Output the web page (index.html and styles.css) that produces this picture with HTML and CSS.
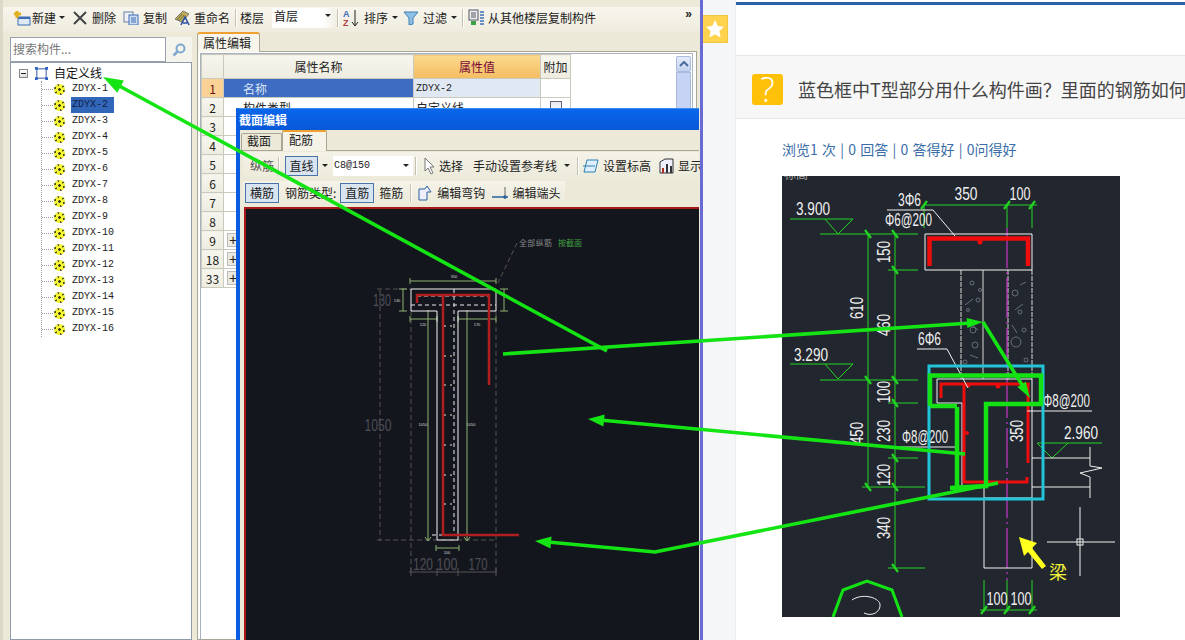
FILE: index.html
```html
<!DOCTYPE html>
<html lang="zh">
<head>
<meta charset="utf-8">
<title>截面编辑</title>
<link rel="stylesheet" href="styles.css">
</head>
<body>
<div class="app">
  <div class="tool-row">
    <svg class="ico i-new" viewBox="0 0 18 16"><rect x="5" y="7" width="12" height="8" fill="#dfe8f5" stroke="#3d6db5"/><rect x="5" y="7" width="12" height="2" fill="#3d6db5"/><path d="M4 1v7M1 4h7" stroke="#e0b020" stroke-width="3"/></svg>
    <span class="tl">新建</span><i class="caret c-a"></i>
    <svg class="ico i-del" viewBox="0 0 14 14"><path d="M1 1l12 12M13 1L1 13" stroke="#444" stroke-width="2"/></svg>
    <span class="tl">删除</span>
    <svg class="ico i-copy" viewBox="0 0 16 14"><rect x="1" y="1" width="9" height="10" fill="#eef2f8" stroke="#6a7f9f"/><rect x="6" y="4" width="9" height="10" fill="#cfddf0" stroke="#3d6db5"/><path d="M8 7h5M8 9h5M8 11h5" stroke="#3d6db5"/></svg>
    <span class="tl">复制</span>
    <svg class="ico i-ren" viewBox="0 0 17 16"><path d="M1 9L9 1l6 3-7 8z" fill="#c8a850" stroke="#777"/><path d="M3 10l5-6M5 11l5-6" stroke="#5a7a4a"/><path d="M7 15l4-8 4 8M9 13h4" stroke="#2a50a0" stroke-width="1.6" fill="none"/></svg>
    <span class="tl">重命名</span>
    <i class="sep s-a"></i>
    <span class="tl">楼层</span>
    <span class="combo floor-combo">首层<i class="caret"></i></span>
    <i class="sep s-b"></i>
    <svg class="ico i-sort" viewBox="0 0 16 18"><text x="0" y="8" class="az az-a">A</text><text x="0" y="17" class="az az-z">Z</text><path d="M12 1v15M9 13l3 4 3-4" stroke="#222" fill="none"/></svg>
    <span class="tl">排序</span><i class="caret c-b"></i>
    <svg class="ico i-fil" viewBox="0 0 16 14"><path d="M1 1h14L10 7v6l-4 1V7z" fill="#8fc0e8" stroke="#3d80b5"/></svg>
    <span class="tl">过滤</span><i class="caret c-c"></i>
    <i class="sep s-c"></i>
    <svg class="ico i-lay" viewBox="0 0 17 17"><rect x="1" y="1" width="9" height="10" fill="#eee" stroke="#556"/><path d="M3 4h5M3 6h5M3 8h5" stroke="#556"/><rect x="3" y="12" width="5" height="4" fill="#3fa04a"/><path d="M12 3h4M12 6h4M12 9h4M12 12h4M12 15h4" stroke="#3d6db5" stroke-width="1.5"/></svg>
    <span class="tl">从其他楼层复制构件</span>
    <span class="more">»</span>
  </div>
  <div class="app-body">
    <aside class="side">
      <div class="search">
        <span class="search-box">搜索构件...</span>
        <span class="search-btn"><svg class="ico i-search" viewBox="0 0 14 14"><circle cx="8.5" cy="5.5" r="4" fill="none" stroke="#7fa8d0" stroke-width="2"/><path d="M5.5 8.5L1.5 12.5" stroke="#7fa8d0" stroke-width="2.5"/></svg></span>
      </div>
      <div class="tree">
        <div class="tree-root">
          <span class="expander"></span>
          <svg class="root-ico" viewBox="0 0 14 14"><rect x="2" y="2" width="10" height="10" fill="none" stroke="#2a50a0"/><path d="M0 0h3v3H0zM11 0h3v3h-3zM0 11h3v3H0zM11 11h3v3h-3z" fill="#2a60c0"/></svg>
          <span class="root-label">自定义线</span>
        </div>
        <ul class="tree-list">
          <li class="tree-item"><i class="gear"></i><span class="item-t">ZDYX-1</span></li>
          <li class="tree-item"><i class="gear"></i><span class="item-t item-sel">ZDYX-2</span></li>
          <li class="tree-item"><i class="gear"></i><span class="item-t">ZDYX-3</span></li>
          <li class="tree-item"><i class="gear"></i><span class="item-t">ZDYX-4</span></li>
          <li class="tree-item"><i class="gear"></i><span class="item-t">ZDYX-5</span></li>
          <li class="tree-item"><i class="gear"></i><span class="item-t">ZDYX-6</span></li>
          <li class="tree-item"><i class="gear"></i><span class="item-t">ZDYX-7</span></li>
          <li class="tree-item"><i class="gear"></i><span class="item-t">ZDYX-8</span></li>
          <li class="tree-item"><i class="gear"></i><span class="item-t">ZDYX-9</span></li>
          <li class="tree-item"><i class="gear"></i><span class="item-t">ZDYX-10</span></li>
          <li class="tree-item"><i class="gear"></i><span class="item-t">ZDYX-11</span></li>
          <li class="tree-item"><i class="gear"></i><span class="item-t">ZDYX-12</span></li>
          <li class="tree-item"><i class="gear"></i><span class="item-t">ZDYX-13</span></li>
          <li class="tree-item"><i class="gear"></i><span class="item-t">ZDYX-14</span></li>
          <li class="tree-item"><i class="gear"></i><span class="item-t">ZDYX-15</span></li>
          <li class="tree-item"><i class="gear"></i><span class="item-t">ZDYX-16</span></li>
        </ul>
      </div>
    </aside>
    <section class="props">
      <div class="tabs"><span class="tab-on">属性编辑</span></div>
      <div class="props-frame">
        <div class="grid-wrap">
          <table class="grid">
            <colgroup><col class="col-n"><col class="col-name"><col class="col-val"><col class="col-add"><col class="col-rest"></colgroup>
            <tr class="head"><th class="rowh"></th><th>属性名称</th><th class="th-val">属性值</th><th>附加</th><td class="empty"></td></tr>
            <tr><td class="rowh rowh-on">1</td><td class="name-on">名称</td><td class="val-on">ZDYX-2</td><td></td><td class="empty"></td></tr>
            <tr><td class="rowh">2</td><td class="name">构件类型</td><td class="val">自定义线</td><td class="chk-cell"><i class="chk"></i></td><td class="empty"></td></tr>
            <tr><td class="rowh">3</td><td></td><td></td><td></td><td class="empty"></td></tr>
            <tr><td class="rowh">4</td><td></td><td></td><td></td><td class="empty"></td></tr>
            <tr><td class="rowh">5</td><td></td><td></td><td></td><td class="empty"></td></tr>
            <tr><td class="rowh">6</td><td></td><td></td><td></td><td class="empty"></td></tr>
            <tr><td class="rowh">7</td><td></td><td></td><td></td><td class="empty"></td></tr>
            <tr><td class="rowh">8</td><td></td><td></td><td></td><td class="empty"></td></tr>
            <tr><td class="rowh">9</td><td class="plus-cell"><i class="plus">+</i></td><td></td><td></td><td class="empty"></td></tr>
            <tr><td class="rowh">18</td><td class="plus-cell"><i class="plus">+</i></td><td></td><td></td><td class="empty"></td></tr>
            <tr><td class="rowh">33</td><td class="plus-cell"><i class="plus">+</i></td><td></td><td></td><td class="empty"></td></tr>
          </table>
          <div class="scrollbar"><span class="sb-up"><svg viewBox="0 0 10 6" class="sb-arrow"><path d="M1 5l4-4 4 4" fill="none" stroke="#4a6aa0" stroke-width="2"/></svg></span><span class="sb-thumb"></span></div>
        </div>
      </div>
    </section>
  </div>

  <div class="dialog">
    <div class="title">截面编辑</div>
    <div class="dlg-body">
      <div class="dlg-tabs"><span class="dtab">截面</span><span class="dtab dtab-on">配筋</span></div>
      <div class="dlg-bar bar-1">
        <span class="tl tl-gray b1-a">纵筋</span>
        <i class="sep s-d"></i>
        <span class="btn">直线</span><i class="caret c-d"></i>
        <span class="combo bar-combo">C8@150<i class="caret"></i></span>
        <i class="sep s-e"></i>
        <svg class="ico i-cur" viewBox="0 0 12 18"><path d="M1 1v13l3-3 3 6 2-1-3-6h4z" fill="#fff" stroke="#777"/></svg>
        <span class="tl">选择</span>
        <span class="tl b1-b">手动设置参考线</span><i class="caret c-e"></i>
        <i class="sep s-f"></i>
        <svg class="ico i-lvl" viewBox="0 0 16 14"><path d="M4 1h11l-3 12H1z" fill="#dfefff" stroke="#2a80b0"/><path d="M0 7h12" stroke="#2a80b0"/></svg>
        <span class="tl">设置标高</span>
        <svg class="ico i-show" viewBox="0 0 15 16"><path d="M1 4l5-3h8v14H1z" fill="#eef" stroke="#333"/><rect x="3" y="10" width="2" height="5" fill="#b03020"/><rect x="7" y="6" width="2" height="9" fill="#333"/><rect x="11" y="8" width="2" height="7" fill="#333"/></svg>
        <span class="tl tl-clip">显示</span>
      </div>
      <div class="dlg-bar bar-2">
        <span class="btn btn-w">横筋</span>
        <span class="tl b2-a">钢筋类型:</span>
        <span class="btn btn-w b2-b">直筋</span>
        <span class="tl b2-c">箍筋</span>
        <i class="sep s-g"></i>
        <svg class="ico i-hook" viewBox="0 0 14 16"><path d="M1 4h6l2-3 4 6h-4v8H1z" fill="#eef" stroke="#2a60a0"/></svg>
        <span class="tl">编辑弯钩</span>
        <svg class="ico i-end" viewBox="0 0 17 14"><path d="M0 11h16" stroke="#2a60a0" stroke-width="1.5"/><path d="M13 1v12" stroke="#666"/><circle cx="13" cy="11" r="1.8" fill="#2a60a0"/></svg>
        <span class="tl">编辑端头</span>
      </div>
      <div class="canvas">
        <svg class="cad" viewBox="246 209 454 431">
          <g class="gray-line">
            <path class="dash" d="M411 311V572M496 311V572M380 290V541M377 289H411M377 540H496"/>
            <path d="M409 572H497M411 568V576M437 568V576M458 568V576M496 568V576"/>
            <path class="dash" d="M517 243L498 283"/>
          </g>
          <text x="382" y="306" class="t-gray" text-anchor="middle" lengthAdjust="spacingAndGlyphs" textLength="18">130</text>
          <text x="378" y="431" class="t-gray" text-anchor="middle" lengthAdjust="spacingAndGlyphs" textLength="27">1050</text>
          <text x="423" y="570" class="t-gray" text-anchor="middle" lengthAdjust="spacingAndGlyphs" textLength="20">120</text>
          <text x="447" y="570" class="t-gray" text-anchor="middle" lengthAdjust="spacingAndGlyphs" textLength="21">100</text>
          <text x="478" y="570" class="t-gray" text-anchor="middle" lengthAdjust="spacingAndGlyphs" textLength="19">170</text>
          <text x="519" y="246" class="t-note" textLength="33">全部纵筋</text>
          <text x="558" y="246" class="t-note-g" textLength="24">按截面</text>
          <g class="sage">
            <path d="M410 281H496M410 278V284M496 278V284M403 289V311M399 289H407M399 311H407M504 289V311M500 289H508M500 311H508M410 319H437M410 316V322M437 316V322M458 319H496M458 316V322M496 316V322M428 310V540M467 310V540M425 537L428 541L431 537M464 537L467 541L470 537M436 548H459M436 545V551M459 545V551"/>
          </g>
          <path class="wht" d="M411 289H496V311H458V540H437V311H411Z"/>
          <path class="wht-dash" d="M454 289V535M411 305H496M417 296H489M432 535H458"/>
          <path class="rebar" d="M489 385V295H417V303"/>
          <path class="rebar" d="M443 295V535H519"/>
          <g class="tiny">
            <text x="454" y="278" text-anchor="middle">350</text>
            <text x="423" y="326" text-anchor="middle">120</text>
            <text x="477" y="326" text-anchor="middle">170</text>
            <text x="423" y="426" text-anchor="middle">1050</text>
            <text x="471" y="426" text-anchor="middle">1050</text>
            <text x="447" y="554" text-anchor="middle">100</text>
            <text x="397" y="302" text-anchor="middle">130</text>
          </g>
          <path class="ticks" d="M444 326h2M450 326h2M444 356h2M450 356h2M444 385h2M450 385h2M444 415h2M450 415h2M444 445h2M450 445h2M444 475h2M450 475h2M444 504h2M450 504h2"/>
        </svg>
      </div>
    </div>
  </div>
</div>

<div class="divider"></div>

<div class="web">
  <div class="rail">
    <div class="star-tile"><svg class="star" viewBox="0 0 20 20"><path d="M10 1l2.800 6 6.200.8-4.600 4.300 1.200 6.400L10 15.300l-5.600 3.200 1.200-6.400L1 7.800 7.200 7z" fill="#fff"/></svg></div>
  </div>
  <main class="main">
    <div class="blue-top"></div>
    <div class="q-head">
      <span class="q-icon">?</span>
      <h1 class="q-title">蓝色框中T型部分用什么构件画？里面的钢筋如何</h1>
    </div>
    <p class="stats">浏览1 次 | 0 回答 | 0 答得好 | 0问得好</p>
    <div class="photo">
      <svg class="photo-svg" viewBox="782 176 338 441">
        <text x="784" y="179" class="corner-t">标高</text>
        <g class="web-lines">
          <path class="dot" d="M961 270V379M1008 270V379M1032 270V379"/>
          <path d="M983 270V379"/>
        </g>
        <g class="conc">
          <circle cx="972" cy="283" r="2"/><circle cx="980" cy="290" r="1.500"/><circle cx="973" cy="330" r="3"/><circle cx="978" cy="300" r="2"/><circle cx="968" cy="310" r="1.500"/><circle cx="975" cy="345" r="3"/><circle cx="965" cy="362" r="2"/><circle cx="1015" cy="293" r="3"/><circle cx="1024" cy="330" r="2"/><circle cx="1016" cy="342" r="5"/><circle cx="1020" cy="312" r="2"/><circle cx="1026" cy="360" r="2"/>
          <path d="M965 305l8-6M972 325l6 5M970 355l8 3M1015 310l8-6M1012 325l5 8M1020 285l6-3"/>
        </g>
        <path class="purple" d="M1007 228V580"/>
        <path class="wht" d="M925 234H1032V270H925Z"/>
        <path class="wht" d="M937 379H1032V568H984V487H962V403H937Z"/>
        <path class="wht" d="M984 498H1032"/>
        <path class="red-f" d="M929.500 266V238.500H1028V266"/>
        <circle class="red-d" cx="980" cy="242" r="2.500"/>
        <path class="red-t" d="M941 398V384H1028V463"/>
        <path class="red-t" d="M964 385V482H1027V477"/>
        <circle class="red-d" cx="968" cy="385" r="2.500"/>
        <circle class="red-d" cx="998" cy="386" r="2.500"/>
        <circle class="red-d" cx="967" cy="433" r="2"/>
        <g class="grn">
          <path d="M924 205H1037M924 205V228M1007 205V228M1032 205V228"/>
          <path d="M868 234V487M895 234V568"/>
          <path d="M820 234H918M888 270H918M820 380H918M888 403H918M888 458H918M862 487H925M888 568H925"/>
          <path d="M790 219H853M825 219L838 234L853 219M790 364H853M825 364L838 379L853 364M1037 443H1102M1037 443L1052 458L1068 443"/>
          <path d="M984 580V612M1007 580V612M1032 580V612M980 610H1037"/>
        </g>
        <path class="grn-tick" d="M921 209l6-8M1004 209l6-8M1029 209l6-8M865 230l6 8M892 230l6 8M892 266l6 8M865 376l6 8M892 376l6 8M892 399l6 8M892 454l6 8M865 483l6 8M892 483l6 8M892 564l6 8M981 614l6-8M1004 614l6-8M1029 614l6-8"/>
        <g class="wl">
          <path d="M887 210H933L955 236M917 349H947L968 388M900 447H957M1027 411H1092"/>
          <path d="M1032 458H1090M1032 487H1090M1090 447V466L1102 468L1080 473L1090 477V498"/>
          <path d="M1047 542H1115M1080 507V576"/>
          <rect x="1077" y="539" width="6" height="6" fill="none"/>
          <path d="M852 600C862 593 878 597 880 604C881 612 872 617 864 613" fill="none"/>
        </g>
        <text x="966" y="200" class="cadt" text-anchor="middle" lengthAdjust="spacingAndGlyphs" textLength="23">350</text>
        <text x="1020" y="200" class="cadt" text-anchor="middle" lengthAdjust="spacingAndGlyphs" textLength="21">100</text>
        <text x="898" y="206" class="cadt" lengthAdjust="spacingAndGlyphs" textLength="23">3Φ6</text>
        <text x="885" y="226" class="cadt" lengthAdjust="spacingAndGlyphs" textLength="47">Φ6@200</text>
        <text x="796" y="215" class="cadt" lengthAdjust="spacingAndGlyphs" textLength="34">3.900</text>
        <text x="794" y="361" class="cadt" lengthAdjust="spacingAndGlyphs" textLength="34">3.290</text>
        <text x="918" y="345" class="cadt" lengthAdjust="spacingAndGlyphs" textLength="23">6Φ6</text>
        <text x="902" y="443" class="cadt" lengthAdjust="spacingAndGlyphs" textLength="46">Φ8@200</text>
        <text x="1043" y="407" class="cadt" lengthAdjust="spacingAndGlyphs" textLength="47">Φ8@200</text>
        <text x="1064" y="439" class="cadt" lengthAdjust="spacingAndGlyphs" textLength="34">2.960</text>
        <text x="997" y="605" class="cadt" text-anchor="middle" lengthAdjust="spacingAndGlyphs" textLength="21">100</text>
        <text x="1021" y="605" class="cadt" text-anchor="middle" lengthAdjust="spacingAndGlyphs" textLength="21">100</text>
        <text transform="translate(890 252) rotate(-90)" class="cadt" text-anchor="middle" lengthAdjust="spacingAndGlyphs" textLength="22">150</text>
        <text transform="translate(863 308) rotate(-90)" class="cadt" text-anchor="middle" lengthAdjust="spacingAndGlyphs" textLength="22">610</text>
        <text transform="translate(890 325) rotate(-90)" class="cadt" text-anchor="middle" lengthAdjust="spacingAndGlyphs" textLength="22">460</text>
        <text transform="translate(890 392) rotate(-90)" class="cadt" text-anchor="middle" lengthAdjust="spacingAndGlyphs" textLength="22">100</text>
        <text transform="translate(863 433) rotate(-90)" class="cadt" text-anchor="middle" lengthAdjust="spacingAndGlyphs" textLength="22">450</text>
        <text transform="translate(890 431) rotate(-90)" class="cadt" text-anchor="middle" lengthAdjust="spacingAndGlyphs" textLength="22">230</text>
        <text transform="translate(890 475) rotate(-90)" class="cadt" text-anchor="middle" lengthAdjust="spacingAndGlyphs" textLength="22">120</text>
        <text transform="translate(890 528) rotate(-90)" class="cadt" text-anchor="middle" lengthAdjust="spacingAndGlyphs" textLength="22">340</text>
        <text transform="translate(1023 431) rotate(-90)" class="cadt" text-anchor="middle" lengthAdjust="spacingAndGlyphs" textLength="22">350</text>
        <rect class="cyan" x="929" y="366" width="114" height="133"/>
        <path class="t-outline" d="M930 406V375.500H1041V404H986V486L950 488M957 407V488M930 406H957"/>
        <path class="yel" d="M1019 537L1037 543L1032 548L1046 566L1042 569L1028 552L1024 556Z"/>
        <text x="1049" y="579" class="liang">梁</text>
        <path class="oct" d="M833 617L843 590L867 581L892 590L902 617"/>
      </svg>
    </div>
  </main>
</div>

<svg class="arrows" viewBox="0 0 1185 640">
  <path d="M607 351L112 82"/>
  <polygon points="103,77 123.900,80.500 117.300,92.700"/>
  <path d="M503 354L971 323"/>
  <polygon points="983,322 967.300,328 966.700,318"/>
  <path d="M983 322L1024 388"/>
  <polygon points="1030,398 1025.800,381.800 1017.400,387"/>
  <path d="M965 454L600 420"/>
  <polygon points="588,419 603.400,426.500 604.600,414.500"/>
  <path d="M998 483L655 552L548 542"/>
  <polygon points="535,541 550.500,548.500 551.500,536.500"/>
</svg>
</body>
</html>
```
FILE: styles.css
```css
* { box-sizing: border-box; }
html, body { margin: 0; padding: 0; }
body {
  width: 1185px;
  height: 640px;
  overflow: hidden;
  display: flex;
  position: relative;
  background: #fff;
  font-family: "Noto Sans CJK SC", "Liberation Sans", sans-serif;
  font-size: 12px;
  color: #222;
}
ul { list-style: none; margin: 0; padding: 0; }
i { font-style: normal; display: block; flex: none; }
svg { display: block; flex: none; }

/* desktop application */
.app {
  position: relative;
  width: 700px;
  flex: none;
  display: flex;
  flex-direction: column;
  background: #ece9d8;
  border-left: 3px solid #dcd9c8;
  overflow: hidden;
}
.tool-row {
  margin-top: 7px;
  height: 25px;
  flex: none;
  display: flex;
  align-items: center;
  padding: 0 0 4px 10px;
  background: linear-gradient(#f7f5ec, #efecdf);
  position: relative;
}
.tl { line-height: 16px; white-space: nowrap; flex: none; }
.tl-gray { color: #555; }
.tl-clip { width: 22px; overflow: hidden; }
.ico { flex: none; }
.i-new { width: 18px; height: 16px; margin-right: 1px; }
.i-del { width: 14px; height: 14px; margin: 0 5px 0 8px; }
.i-copy { width: 16px; height: 14px; margin: 0 4px 0 7px; }
.i-ren { width: 17px; height: 16px; margin: 0 3px 0 7px; }
.i-sort { width: 16px; height: 18px; margin: 0 5px 0 0; }
.i-fil { width: 16px; height: 14px; margin: 0 4px 0 5px; }
.i-lay { width: 17px; height: 17px; margin: 0 3px 0 4px; }
.i-search { width: 14px; height: 14px; }
.az { font: bold 9px "Liberation Sans", sans-serif; }
.az-a { fill: #3d6db5; }
.az-z { fill: #b04040; }
.caret {
  width: 0;
  height: 0;
  border: 3px solid transparent;
  border-top: 3px solid #222;
  border-bottom: 0;
}
.c-a { margin-left: 3px; }
.c-b { margin-left: 4px; }
.c-c { margin-left: 4px; }
.c-d { margin-left: 4px; }
.c-e { margin-left: 7px; }
.sep { height: 18px; background: #c4c1b0; border-right: 1px solid #fff; width: 2px; }
.s-a { margin: 0 3px 0 5px; }
.s-b { margin: 0 4px 0 2px; }
.s-c { margin: 0 0 0 5px; }
.combo {
  display: flex;
  align-items: center;
  justify-content: space-between;
  background: #fff;
  flex: none;
}
.floor-combo { width: 63px; height: 20px; margin-left: 8px; padding: 0 4px 4px 2px; background: linear-gradient(90deg, #fff 80%, #f2f0e6); }
.more { position: absolute; right: 8px; top: 0; font: bold 12px/14px "Liberation Sans", sans-serif; color: #222; }

.app-body { flex: 1; display: flex; min-height: 0; }
.side {
  width: 182px;
  margin: 5px 0 0 7px;
  flex: none;
  display: flex;
  flex-direction: column;
}
.search { height: 25px; display: flex; flex: none; }
.search-box {
  width: 156px;
  height: 25px;
  border: 1px solid #98a2ae;
  background: #fff;
  padding-left: 2px;
  color: #777;
  line-height: 21px;
}
.search-btn { flex: 1; display: flex; align-items: center; justify-content: center; background: #f5f4ec; }
.tree { flex: 1; background: #fff; border: 1px solid #8f9ba8; padding-top: 2px; }
.tree-root { height: 16px; display: flex; align-items: center; padding-left: 8px; }
.expander {
  width: 9px; height: 9px; border: 1px solid #888; background: linear-gradient(#fff, #ddd);
  position: relative; flex: none;
}
.expander::after { content: ""; position: absolute; left: 1px; right: 1px; top: 3px; height: 1px; background: #222; }
.root-ico { width: 13px; height: 13px; margin-left: 7px; }
.root-label { margin-left: 6px; line-height: 16px; color: #111; }
.tree-list { margin-left: 30px; border-left: 1px dotted #999; }
.tree-item { height: 16px; display: flex; align-items: center; position: relative; padding-left: 12px; }
.tree-item::before { content: ""; position: absolute; left: 0; top: 8px; width: 11px; border-top: 1px dotted #999; }
.gear {
  width: 11px; height: 11px; border-radius: 50%;
  background:
    radial-gradient(circle, #3a3a10 0 1px, #f8f834 1.6px 3.4px, transparent 3.8px),
    repeating-conic-gradient(#f0f030 0 38deg, #4a4a14 38deg 60deg);
}
.item-t { margin-left: 6px; padding: 0 1px; font: 10px/16px "Liberation Mono", monospace; color: #222; }
.item-sel { background: #3266b8; color: #10204a; padding-right: 6px; }

.props { flex: 1; display: flex; flex-direction: column; min-width: 0; margin-left: 5px; }
.tabs { height: 19px; flex: none; display: flex; }
.tab-on {
  width: 63px; height: 20px; background: #f8f6ec; border: 1px solid #a8a696; border-top: 2px solid #f0a030; border-bottom: 0;
  border-radius: 3px 3px 0 0; padding-left: 5px; line-height: 17px; position: relative; z-index: 1;
}
.props-frame { flex: 1; background: #fdfdfb; border: 1px solid #a8a696; margin-right: 3px; padding: 1px 3px 0 2px; }
.grid-wrap { border: 1px solid #a9b3bd; border-bottom: 0; height: 100%; background: #fff; display: flex; position: relative; }
.grid { table-layout: fixed; width: 476px; height: 232px; border-collapse: collapse; flex: none; }
.col-n { width: 22px; }
.col-name { width: 190px; }
.col-val { width: 127px; }
.col-add { width: 30px; }
.grid th, .grid td { padding: 0; height: 19px; border: 1px solid #c9c9bd; font-weight: 400; overflow: hidden; white-space: nowrap; }
.grid .empty { border: 0; }
.head th { height: 24px; background: linear-gradient(#f7f6ee, #eeece0); text-align: center; }
.grid .th-val { background: linear-gradient(#fbd98e, #f4bd62); color: #7a0a36; }
.rowh { background: linear-gradient(#f7f6ee, #eeece0); text-align: center; }
.grid .rowh-on { background: #fbd295; color: #6a1010; }
.grid .name-on { background: #3d6cc2; color: #dce6f6; padding-left: 19px; }
.grid .val-on { background: #e0e8f4; font: 10px "Liberation Mono", monospace; padding-left: 2px; }
.grid .name { padding-left: 19px; }
.grid .val { padding-left: 2px; }
.chk-cell { text-align: center; }
.chk { width: 12px; height: 12px; margin: 0 auto; border: 1px solid #667; background: linear-gradient(#e8e8f0, #fff); }
.grid .plus-cell { padding-left: 3px; }
.plus { width: 12px; height: 14px; background: #eceae0; border: 1px solid #bbb; line-height: 12px; text-align: center; font-family: "Liberation Sans", sans-serif; font-size: 14px; }
.scrollbar { position: absolute; right: 1px; top: 2px; bottom: 0; width: 15px; display: flex; flex-direction: column; background: #eef2fb; }
.sb-up { height: 16px; flex: none; background: linear-gradient(#e4ecfa, #c4d2ee); border: 1px solid #a8bae0; display: flex; align-items: center; justify-content: center; border-radius: 2px; }
.sb-arrow { width: 10px; height: 6px; }
.sb-thumb { flex: 1; background: #c6d3f4; border: 1px solid #a8bae0; }

/* dialog window */
.dialog {
  position: absolute;
  left: 233px;
  top: 108px;
  width: 463px;
  height: 540px;
  background: #0a5ce0;
  border-left: 4px solid #0a5ce0;
  border-top: 1px solid #3a8cf0;
  display: flex;
  flex-direction: column;
  z-index: 2;
}
.title {
  height: 21px;
  flex: none;
  background: linear-gradient(#0a66ec, #0658d8);
  color: #fff;
  font-weight: 700;
  font-size: 12px;
  line-height: 21px;
  margin-left: -1px;
}
.dlg-body { flex: 1; background: #ece9d8; padding-left: 3px; display: flex; flex-direction: column; min-height: 0; }
.dlg-tabs { height: 21px; flex: none; display: flex; align-items: flex-end; border-bottom: 1px solid #a8a696; margin-left: -2px; }
.dtab { width: 41px; height: 17px; line-height: 14px; padding-left: 5px; background: #ece9d8; border: 1px solid #a8a696; border-bottom: 0; border-radius: 2px 2px 0 0; }
.dtab-on { width: 45px; height: 21px; line-height: 15px; padding-left: 6px; background: #f5f3e8; border-top: 2px solid #f0a030; margin-bottom: -1px; }
.dlg-bar { flex: none; display: flex; align-items: center; background: linear-gradient(#f5f3e9, #ecead9); }
.bar-1 { height: 27px; margin-top: 1px; padding-left: 7px; }
.bar-2 { height: 23px; margin-top: 2px; padding-left: 2px; width: 322px; }
.b1-a { margin-right: 3px; }
.s-d { margin: 0 5px 0 1px; }
.btn { width: 33px; height: 20px; border: 1px solid #4a74a8; background: #d8e4f0; text-align: center; line-height: 17px; flex: none; }
.btn-w { width: 34px; }
.bar-combo { width: 80px; height: 20px; margin-left: 5px; padding: 0 4px 0 1px; font: 10px "Liberation Mono", monospace; }
.s-e { margin: 0 7px 0 2px; }
.i-cur { width: 12px; height: 18px; margin-right: 3px; }
.b1-b { margin-left: 10px; }
.s-f { margin: 0 4px 0 7px; }
.i-lvl { width: 16px; height: 14px; margin-right: 4px; }
.i-show { width: 15px; height: 16px; margin: 0 4px 0 8px; }
.b2-a { margin-left: 6px; }
.b2-b { margin-left: 4px; }
.b2-c { margin-left: 5px; }
.s-g { margin: 0 6px 0 7px; }
.i-hook { width: 14px; height: 16px; margin-right: 5px; }
.i-end { width: 17px; height: 14px; margin: 0 3px 0 7px; }
.canvas { flex: 1; margin: 3px 0 0 1px; min-height: 0; background: #14161e; border-top: 2px solid #a81818; border-left: 2px solid #a81818; overflow: hidden; }
.cad { width: 454px; height: 431px; }
.gray-line { fill: none; stroke: #555; stroke-width: 1; }
.dash { stroke-dasharray: 5 3; }
.t-gray { font: 16px "Liberation Sans", sans-serif; fill: #4c4e56; }
.t-note { font: 8px "Noto Sans CJK SC", sans-serif; fill: #888; }
.t-note-g { font: 8px "Noto Sans CJK SC", sans-serif; fill: #40a040; }
.sage { fill: none; stroke: #8fb272; stroke-width: 1; }
.wht { fill: none; stroke: #f4f4f4; stroke-width: 1; }
.wht-dash { fill: none; stroke: #e8e8f0; stroke-width: 1; stroke-dasharray: 4 3; }
.rebar { fill: none; stroke: #b01e20; stroke-width: 2.5; }
.tiny { font: 4px "Liberation Sans", sans-serif; fill: #d8d8d8; }
.ticks { stroke: #f0e8c0; stroke-width: 1; fill: none; }

/* divider and web page */
.divider { width: 3px; flex: none; background: #6a6ad4; }
.web { flex: 1; display: flex; min-width: 0; background: #fff; }
.rail { width: 33px; flex: none; background: #f5f6f7; border-right: 1px solid #eee; padding-top: 15px; }
.star-tile { width: 25px; height: 28px; background: #ffd24f; border: 1px solid #f0c840; border-left: 0; display: flex; align-items: center; justify-content: center; }
.star { width: 20px; height: 20px; }
.main { flex: 1; min-width: 0; padding-top: 2px; overflow: hidden; }
.blue-top { height: 3px; background: #2b62a8; }
.q-head {
  margin-top: 50px;
  height: 64px;
  display: flex;
  align-items: center;
  background: #f7f7f7;
  border-top: 1px solid #e6e6e6;
  border-bottom: 1px solid #e6e6e6;
  padding: 4px 0 0 16px;
}
.q-icon {
  width: 31px;
  height: 31px;
  flex: none;
  border-radius: 3px;
  background: #ffc107;
  color: #fff;
  font: 300 34px/31px "Open Sans", "Liberation Sans", sans-serif;
  text-align: center;
}
.q-title { margin: 0 0 0 15px; font-size: 18px; font-weight: 400; color: #444; white-space: nowrap; line-height: 26px; }
.stats { margin: 20px 0 0 46px; font-size: 14px; line-height: 20px; color: #3b6ea8; height: 20px; white-space: nowrap; word-spacing: 1.1px; }
.photo { margin: 17px 0 0 46px; width: 338px; height: 441px; background: #22262e; }
.photo-svg { width: 338px; height: 441px; }
.corner-t { font: 12px "Noto Sans CJK SC", sans-serif; fill: #aaa; }
.web-lines { fill: none; stroke: #d8d8d8; stroke-width: 1; }
.dot { stroke-dasharray: 5 1; }
.conc { fill: none; stroke: #77808a; stroke-width: .8; }
.purple { stroke: #c838c8; stroke-width: 1.2; stroke-dasharray: 40 4 2 4; fill: none; }
.red-f { fill: none; stroke: #ee0c0c; stroke-width: 4.5; }
.red-t { fill: none; stroke: #ee0c0c; stroke-width: 3; }
.red-d { fill: #ee0c0c; }
.grn { fill: none; stroke: #22d522; stroke-width: 1; }
.grn-tick { fill: none; stroke: #22d522; stroke-width: 2.2; }
.wl { fill: none; stroke: #f0f0f0; stroke-width: 1; }
.cadt { font: 18px "Liberation Sans", sans-serif; fill: #f0f0f0; }
.cyan { fill: none; stroke: #22c4d8; stroke-width: 3; }
.t-outline { fill: none; stroke: #14e214; stroke-width: 4.5; }
.yel { fill: #ffff1e; }
.liang { font: 18px "Noto Sans CJK SC", sans-serif; fill: #f2f23c; }
.oct { fill: none; stroke: #14e214; stroke-width: 3; }

/* annotation arrows over the whole screenshot */
.arrows { position: absolute; left: 0; top: 0; width: 1185px; height: 640px; z-index: 10; pointer-events: none; }
.arrows path { fill: none; stroke: #14e414; stroke-width: 3.6; }
.arrows polygon { fill: #14e414; }
```
